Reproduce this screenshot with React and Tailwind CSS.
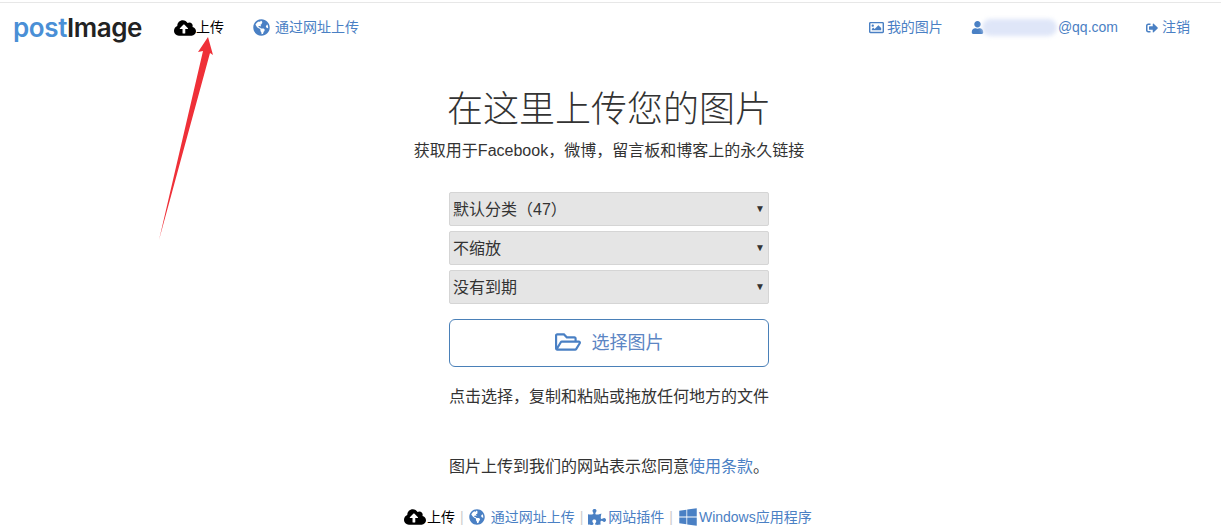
import { FaCloudUploadAlt, FaGlobeAmericas, FaPuzzlePiece, FaWindows, FaRegFolderOpen, FaRegImage, FaUser, FaSignOutAlt } from 'react-icons/fa';

const selects = ['默认分类（47）', '不缩放', '没有到期'];

const App = () => {
    return (
        <div className="relative h-[529px] w-[1221px] overflow-hidden bg-white text-[#333] [font-family:'Liberation_Sans','Noto_Sans_CJK_SC',sans-serif]">
            {/* Top Header */}
            <header className="mt-[2px] flex h-[50px] items-center border-t border-[#e7e7e7] pl-[13px] pr-[31px] text-[14px] text-[#4a80c4]">
                <div className="flex w-[161px] items-baseline text-[26px] font-semibold leading-none tracking-[-0.4px] [font-family:Inter,sans-serif]">
                    <span className="text-[#4a8fd6]">post</span>
                    <span className="text-[#222]">Image</span>
                </div>
                <a className="flex items-center text-black">
                    <FaCloudUploadAlt size={22} /> 上传
                </a>
                <a className="ml-[29px] flex items-center">
                    <FaGlobeAmericas size={17} className="mr-[5px]" /> 通过网址上传
                </a>
                <a className="ml-auto flex items-center">
                    <FaRegImage size={15} className="mr-[3px]" /> 我的图片
                </a>
                <span className="ml-[28px] flex items-center">
                    <FaUser size={13} />
                    <span className="-ml-[2px] h-[17px] w-[75px] rounded-full bg-[#dfe6f8] blur-[2px]"></span>
                    <span className="ml-[1px]">@qq.com</span>
                </span>
                <a className="ml-[28px] flex items-center">
                    <FaSignOutAlt size={12} className="mr-[4px]" /> 注销
                </a>
            </header>

            <main className="ml-[449px] flex w-[320px] flex-col items-center">
                <h1 className="mt-[35px] whitespace-nowrap text-[36px] font-light leading-[46px] text-[#333]">在这里上传您的图片</h1>
                <p className="mt-[7px] whitespace-nowrap text-[16px] leading-[22px]">获取用于Facebook，微博，留言板和博客上的永久链接</p>

                <div className="mt-[30px] flex w-full flex-col gap-[5px]">
                    {selects.map((s) => (
                        <div key={s} className="flex h-[34px] items-center justify-between rounded-[2px] border border-[#d5d5d5] bg-[#e5e5e5] pl-[3px] pr-[3px] pt-[2px] text-[16px] text-[#333]">
                            <span>{s}</span>
                            <span className="-mt-[3px] text-[10px] text-[#333]">▼</span>
                        </div>
                    ))}
                </div>

                <button className="mt-[15px] flex h-[48px] w-full items-center justify-center gap-[11px] rounded-[6px] border border-[#4a80b8] pt-[1px] text-[18px] text-[#5c86c4]">
                    <FaRegFolderOpen size={26} className="-mt-[4px] text-[#4a80c4]" /> 选择图片
                </button>

                <p className="mt-[19px] self-start whitespace-nowrap text-[16px] leading-[22px]">点击选择，复制和粘贴或拖放任何地方的文件</p>
                <p className="mt-[48px] self-start whitespace-nowrap text-[16px] leading-[22px]">
                    图片上传到我们的网站表示您同意<a className="text-[#4a80c4]">使用条款</a>。
                </p>
            </main>

            {/* Footer Links */}
            <footer className="ml-[404px] mt-[28px] flex items-center text-[14px] text-[#4a80c4]">
                <a className="flex items-center text-black">
                    <FaCloudUploadAlt size={22} className="mr-[1px]" /> 上传
                </a>
                <span className="mx-[5px] text-[#ccc]">|</span>
                <a className="flex items-center">
                    <FaGlobeAmericas size={16} className="mr-[6px]" /> 通过网址上传
                </a>
                <span className="mx-[5px] text-[#ccc]">|</span>
                <a className="flex items-center">
                    <FaPuzzlePiece size={18} className="mr-[2px]" /> 网站插件
                </a>
                <span className="mx-[5px] text-[#ccc]">|</span>
                <a className="flex items-center">
                    <FaWindows size={20} className="mr-[1px]" /> Windows应用程序
                </a>
            </footer>

            {/* Red annotation arrow */}
            <svg className="absolute left-[150px] top-[30px]" width="70" height="215" viewBox="0 0 70 215">
                <path d="M9 210 L53 21 L48 22 L58 7 L63 25 L60 23 Z" fill="#ef3038" />
            </svg>
        </div>
    );
};

export default App;
